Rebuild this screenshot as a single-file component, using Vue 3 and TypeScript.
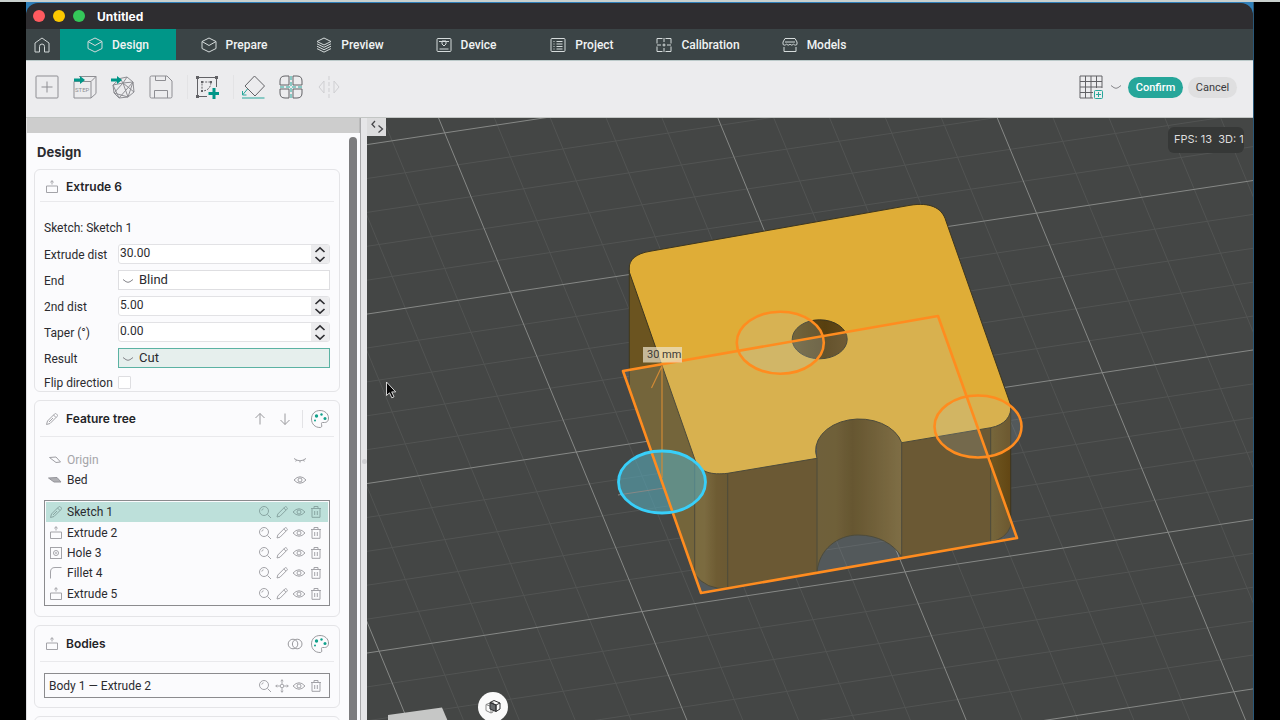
<script setup lang="ts">
import { ref } from 'vue'

interface Tab { label: string; icon: string }
interface Feature { label: string; icon: string }
interface Line { x1: number; y1: number; x2: number; y2: number; major: boolean }

const tabs: Tab[] = [
  { label: 'Design', icon: 'cube' },
  { label: 'Prepare', icon: 'cube' },
  { label: 'Preview', icon: 'layers' },
  { label: 'Device', icon: 'device' },
  { label: 'Project', icon: 'project' },
  { label: 'Calibration', icon: 'calibration' },
  { label: 'Models', icon: 'models' },
]
const activeTab = ref('Design')

const toolGroups = [
  [
    { icon: 't-add', label: 'New' },
    { icon: 't-step', label: 'Import STEP' },
    { icon: 't-mesh', label: 'Import mesh' },
    { icon: 't-save', label: 'Save' },
  ],
  [{ icon: 't-sketch', label: 'New sketch' }],
  [
    { icon: 't-plane', label: 'Place on face' },
    { icon: 't-pattern', label: 'Pattern' },
    { icon: 't-mirror', label: 'Mirror' },
  ],
]

const extrudeDist = ref('30.00')
const endType = ref('Blind')
const secondDist = ref('5.00')
const taper = ref('0.00')
const result = ref('Cut')
const flip = ref(false)

const features: Feature[] = [
  { label: 'Sketch 1', icon: 'pencil' },
  { label: 'Extrude 2', icon: 'extrude' },
  { label: 'Hole 3', icon: 'hole' },
  { label: 'Fillet 4', icon: 'fillet' },
  { label: 'Extrude 5', icon: 'extrude' },
]
const selected = ref('Sketch 1')
const featureActions = ['search', 'edit', 'eye', 'trash']
const bodyActions = ['search', 'move', 'eye', 'trash']

// Ground grid: one major line every five cells, cell edges u and v.
const origin = { x: 444.7, y: 132.9 }
const u = { x: 52.6, y: -7.93 }
const v = { x: 13.16, y: 31.91 }
const at = (i: number, j: number) => ({
  x: origin.x + i * u.x + j * v.x,
  y: origin.y + i * u.y + j * v.y,
})
const line = (a: { x: number; y: number }, b: { x: number; y: number }, n: number): Line => ({
  x1: a.x, y1: a.y, x2: b.x, y2: b.y, major: n % 5 === 0,
})
const grid: Line[] = []
for (let i = -12; i <= 30; i++) grid.push(line(at(i, -12), at(i, 34), i))
for (let j = -12; j <= 34; j++) grid.push(line(at(-12, j), at(30, j), j))
grid.sort((a, b) => Number(a.major) - Number(b.major))
</script>

<template>
  <svg class="defs" aria-hidden="true">
    <symbol id="home" viewBox="0 0 16 16"><path d="M1 6 8 1l7 5v9h-4.500V9.500a2.500 2.500 0 0 0-5 0V15H1z" /></symbol>
    <symbol id="cube" viewBox="0 0 16 16"><path d="M8 1l7 3.500v7L8 15l-7-3.500v-7zM1 4.500 8 8.500l7-4" /></symbol>
    <symbol id="layers" viewBox="0 0 16 16"><path d="M8 1l7 3.500-7 3.500-7-3.500zM1 6.800l7 3.500 7-3.500M1 9.200l7 3.500 7-3.500M1 11.600l7 3.500 7-3.500" /></symbol>
    <symbol id="device" viewBox="0 0 16 16"><rect x="1" y="1.500" width="14" height="13" rx="1" /><path d="M3 4.500h10M3.500 12h9M6 4h4v3L8 9 6 7z" /></symbol>
    <symbol id="project" viewBox="0 0 16 16"><rect x="1" y="1.500" width="14" height="13" rx="1" /><path d="M3.500 4.500h1M6.500 4.500h6M3.500 7h1M6.500 7h6M3.500 9.500h1M6.500 9.500h6M3.500 12h1M6.500 12h6" /></symbol>
    <symbol id="calibration" viewBox="0 0 16 16"><path d="M6.500 1.500H1v5M9.500 1.500H15v5M6.500 14.500H1v-5M9.500 14.500H15v-5M8 1v4M8 11v4M1 8h4M11 8h4M6.500 8h3M8 6.500v3" /></symbol>
    <symbol id="models" viewBox="0 0 16 16"><path d="M3 1.500h10L15 5v2c0 1.500-2.500 1.500-3.500 0-1 1.500-2.500 1.500-3.500 0-1 1.500-2.500 1.500-3.500 0C3.500 8.500 1 8.500 1 7V5zM3 5h10M2 10v4.500h12V10" /></symbol>

    <symbol id="t-add" viewBox="0 0 24 24"><rect x="1" y="1" width="22" height="22" rx="1" /><path d="M12 6.500v11M6.500 12h11" /></symbol>
    <symbol id="t-mesh" viewBox="0 0 24 24"><path d="M9 3.500 16 2l6 5 1 10-6 5-9 1-5-5-1-8zM2 10l10-2 10-1M12 8l5 14M12 8 3 18M2 10l6 13M3 18l14 4M22 7 8 23M9 3.500 12 8l4-6M12 8l11 9M17 22l5-15" /><path class="solid" d="M0 3.500h6V1l5 4-5 4V6.500H0z" /></symbol>
    <symbol id="t-save" viewBox="0 0 24 24"><path d="M1 2.500Q1 1 2.500 1H18l5 5v15.500q0 1.500-1.500 1.500h-19Q1 23 1 21.500zM6.500 1v4.500h10V1M5.500 23v-7.500h13V23" /></symbol>
    <symbol id="t-sketch" viewBox="0 0 24 24"><path d="M2.500 2v20M2 2.500h20M21.500 2v10M2 21.500h10" /><path d="M7 7h9c0 5-3 9-9 9z" stroke-dasharray="2 1.200" /><path class="dot" d="M1 1h3v3H1zM20 1h3v3h-3zM1 20h3v3H1zM6 6h2v2H6zM15 6h2v2h-2zM6 15h2v2H6z" /><path class="solid" d="M17.500 13h3v4h4v3h-4v4h-3v-4h-4v-3h4z" /></symbol>
    <symbol id="t-plane" viewBox="0 0 24 24"><path d="M13.500 1 23.500 11l-9.500 10L4 11z" /><path class="green" d="M1 23h22.500M6.500 14 1.500 20M1.500 16v4h4" /></symbol>
    <symbol id="t-pattern" viewBox="0 0 24 24"><path d="M10 1v9H1V6q0-5 5-5zM14 1v9h9V6q0-5-5-5zM10 23v-9H1v4q0 5 5 5zM14 23v-9h9v4q0 5-5 5z" /><path class="green" d="M12 1v22M1 12h22" stroke-dasharray="4 2" /></symbol>
    <symbol id="t-mirror" viewBox="0 0 24 24"><path d="M7 6v12L2 12zM17 6v12l5-6z" /><path d="M12 1v22" stroke-dasharray="4 2" /></symbol>
    <symbol id="t-grid" viewBox="0 0 24 24"><path d="M23 13V1H1v22h13M1 6.500h22M1 12h22M1 17.500h13M6.500 1v22M12 1v22M17.500 1v12" /><g class="green"><rect x="15.500" y="15.500" width="8" height="8" rx="1" /><path d="M19.500 17v5M17 19.500h5" /></g></symbol>

    <symbol id="chev" viewBox="0 0 12 8"><path d="M1 2.500 4 4.700q2 1.200 4 0l3-2.200" /></symbol>
    <symbol id="up" viewBox="0 0 12 8"><path d="M1.500 6 6 1.800 10.500 6" /></symbol>
    <symbol id="down" viewBox="0 0 12 8"><path d="M1.500 2 6 6.200 10.500 2" /></symbol>
    <symbol id="extrude" viewBox="0 0 14 14"><path d="M1.500 6h11v6.500h-11zM7 4.500V.8M5.300 2.300 7 .7l1.700 1.600" /></symbol>
    <symbol id="pencil" viewBox="0 0 14 14"><path d="M1.500 12.500l1-3.500L9.500 2q1-1 2 0l.5.500q1 1 0 2l-7 7zM8.500 3l2.500 2.500M4 10l4-4" /></symbol>
    <symbol id="edit" viewBox="0 0 14 14"><path d="M2 12l.8-3L9.800 2q.8-.8 1.600 0l.6.600q.8.800 0 1.600L5 11.200zM8.800 3l2.200 2.200" /></symbol>
    <symbol id="hole" viewBox="0 0 14 14"><rect x="1.500" y="1.500" width="11" height="11" /><circle cx="7" cy="7" r="2.500" /><circle cx="7" cy="7" r=".5" /></symbol>
    <symbol id="fillet" viewBox="0 0 14 14"><path d="M1.500 12.500V6q0-4.500 4.500-4.500h6.500" /></symbol>
    <symbol id="plane" viewBox="0 0 14 14"><path d="M1.500 4.500 8 4l4.500 5-4.500.5z" /></symbol>
    <symbol id="bed" viewBox="0 0 14 14"><path class="bed" d="M.5 5 9 4.500l4 4.500H6z" /></symbol>
    <symbol id="search" viewBox="0 0 14 14"><circle cx="6" cy="6" r="4.500" /><path d="M9.500 9.500 13 13M3.800 5.500Q4 4 5.500 3.800" /></symbol>
    <symbol id="eye" viewBox="0 0 14 14"><path d="M1 7q6-6.500 12 0-6 6.500-12 0z" /><circle cx="7" cy="7" r="2" /></symbol>
    <symbol id="eye-off" viewBox="0 0 14 14"><path d="M1 5.500q6 4.500 12 0M3.500 7l-.8 1.500M7 8v1.500M10.500 7l.8 1.500" /></symbol>
    <symbol id="trash" viewBox="0 0 14 14"><path d="M2 3.500h10M5 3.500v-2h4v2M3 3.500v8.800h8V3.500M5.700 6v4M8.300 6v4" /></symbol>
    <symbol id="move" viewBox="0 0 14 14"><circle cx="7" cy="7" r="1.800" /><path d="M7 .8v4M7 9.200v4M.8 7h4M9.200 7h4M5.700 2 7 .8 8.300 2M5.700 12 7 13.200 8.300 12M2 5.700.8 7 2 8.300M12 5.700 13.200 7 12 8.300" /></symbol>
    <symbol id="arrow-up" viewBox="0 0 14 14"><path d="M7 12.500v-11M2.500 6 7 1.500 11.500 6" /></symbol>
    <symbol id="arrow-down" viewBox="0 0 14 14"><path d="M7 1.500v11M2.500 8 7 12.500 11.500 8" /></symbol>
    <symbol id="rings" viewBox="0 0 16 14"><circle cx="6" cy="7" r="4.800" /><circle cx="10.200" cy="7" r="4.800" /></symbol>
    <symbol id="palette" viewBox="0 0 20 20"><path d="M10 1.500c5 0 8.500 3.500 8.500 7.500 0 3.500-2 4.500-4 4.500h-2c-1.500 0-1 1.500-.8 2.500.4 2-.7 2.500-1.700 2.500C5 18.500 1.500 15 1.500 10S5 1.500 10 1.500z" /><g class="paint"><circle cx="6.500" cy="7" r="1.700" /><circle cx="11.500" cy="5.500" r="1.200" /><circle cx="15" cy="9.500" r="1.500" /><circle cx="5" cy="11.500" r="1" /></g></symbol>
  </svg>

  <div class="desktop">
    <div class="window">
      <header class="titlebar">
        <span class="light red"></span><span class="light yellow"></span><span class="light green-light"></span>
        <h1>Untitled</h1>
      </header>

      <nav class="tabs">
        <button class="home" aria-label="Home"><svg class="ico16"><use href="#home" /></svg></button>
        <button v-for="t in tabs" :key="t.label" class="tab" :class="{ active: t.label === activeTab }" @click="activeTab = t.label">
          <svg class="ico16"><use :href="'#' + t.icon" /></svg><span>{{ t.label }}</span>
        </button>
      </nav>

      <div class="toolbar">
        <div v-for="(g, n) in toolGroups" :key="n" class="tools">
          <button v-for="t in g" :key="t.icon" class="tool" :class="t.icon" :aria-label="t.label">
            <svg v-if="t.icon === 't-step'" viewBox="0 0 24 24"><path d="M1 6.500h17V23H1zM18 6.500 23 1.500H6M23 1.500v17L18 23" /><path class="solid" d="M1 3.500h6V1l5 4-5 4V6.500H1z" /><text class="step" x="2" y="17">STEP</text></svg>
            <svg v-else><use :href="'#' + t.icon" /></svg>
          </button>
        </div>
        <div class="spacer"></div>
        <button class="tool t-grid" aria-label="Grid"><svg><use href="#t-grid" /></svg></button>
        <button class="more" aria-label="Grid options"><svg><use href="#chev" /></svg></button>
        <button class="pill confirm">Confirm</button>
        <button class="pill cancel">Cancel</button>
      </div>

      <div class="body">
        <aside class="sidebar">
          <div class="strip"></div>
          <div class="scroll">
            <div class="content">
              <h2>Design</h2>

              <section class="card">
                <div class="head tight"><svg class="ico14"><use href="#extrude" /></svg><h3>Extrude 6</h3></div>
                <p class="source">Sketch: Sketch 1</p>
                <form class="form" @submit.prevent>
                  <label for="dist">Extrude dist</label>
                  <div class="spin"><input id="dist" v-model="extrudeDist" type="text" /><span class="steps"><button type="button" aria-label="Increase"><svg><use href="#up" /></svg></button><button type="button" aria-label="Decrease"><svg><use href="#down" /></svg></button></span></div>
                  <label for="end">End</label>
                  <div class="pick"><svg><use href="#chev" /></svg><select id="end" v-model="endType"><option>Blind</option></select></div>
                  <label for="dist2">2nd dist</label>
                  <div class="spin"><input id="dist2" v-model="secondDist" type="text" /><span class="steps"><button type="button" aria-label="Increase"><svg><use href="#up" /></svg></button><button type="button" aria-label="Decrease"><svg><use href="#down" /></svg></button></span></div>
                  <label for="taper">Taper (°)</label>
                  <div class="spin"><input id="taper" v-model="taper" type="text" /><span class="steps"><button type="button" aria-label="Increase"><svg><use href="#up" /></svg></button><button type="button" aria-label="Decrease"><svg><use href="#down" /></svg></button></span></div>
                  <label for="result">Result</label>
                  <div class="pick focus"><svg><use href="#chev" /></svg><select id="result" v-model="result"><option>Cut</option></select></div>
                  <label for="flip">Flip direction</label>
                  <input id="flip" v-model="flip" class="check" type="checkbox" />
                </form>
              </section>

              <section class="card">
                <div class="head">
                  <svg class="ico14"><use href="#pencil" /></svg><h3>Feature tree</h3>
                  <button class="plain" aria-label="Move up"><svg class="ico14"><use href="#arrow-up" /></svg></button>
                  <button class="plain" aria-label="Move down"><svg class="ico14"><use href="#arrow-down" /></svg></button>
                  <span class="rule"></span>
                  <button class="plain" aria-label="Colors"><svg class="ico18"><use href="#palette" /></svg></button>
                </div>
                <div class="refs">
                  <div class="ref off"><svg class="ico14"><use href="#plane" /></svg><span>Origin</span><button class="plain" aria-label="Show origin"><svg class="ico14"><use href="#eye-off" /></svg></button></div>
                  <div class="ref"><svg class="ico14"><use href="#bed" /></svg><span>Bed</span><button class="plain" aria-label="Hide bed"><svg class="ico14"><use href="#eye" /></svg></button></div>
                </div>
                <ul class="list tree">
                  <li v-for="f in features" :key="f.label" :class="{ selected: f.label === selected }" @click="selected = f.label">
                    <svg class="ico14"><use :href="'#' + f.icon" /></svg><span>{{ f.label }}</span>
                    <button v-for="a in featureActions" :key="a" class="plain" :aria-label="a"><svg class="ico14"><use :href="'#' + a" /></svg></button>
                  </li>
                </ul>
              </section>

              <section class="card">
                <div class="head pair">
                  <svg class="ico14"><use href="#extrude" /></svg><h3>Bodies</h3>
                  <button class="plain" aria-label="Boolean"><svg class="rings"><use href="#rings" /></svg></button>
                  <button class="plain" aria-label="Colors"><svg class="ico18"><use href="#palette" /></svg></button>
                </div>
                <ul class="list bodies">
                  <li><span>Body 1 — Extrude 2</span>
                    <button v-for="a in bodyActions" :key="a" class="plain" :aria-label="a"><svg class="ico14"><use :href="'#' + a" /></svg></button>
                  </li>
                </ul>
              </section>

              <section class="card last"></section>
            </div>
            <div class="thumb"></div>
          </div>
        </aside>
        <div class="splitter"><i></i></div>

        <main class="view">
          <svg class="scene" viewBox="367 118 887 602" preserveAspectRatio="xMinYMin slice">
            <defs>
              <linearGradient id="corner"><stop offset="0" stop-color="#735b25" /><stop offset=".3" stop-color="#735b26" /><stop offset=".65" stop-color="#644a17" /><stop offset="1" stop-color="#5f4617" /></linearGradient>
              <linearGradient id="cut"><stop offset="0" stop-color="#654e20" /><stop offset=".22" stop-color="#654e1e" /><stop offset=".42" stop-color="#5a4314" /><stop offset=".6" stop-color="#634b1b" /><stop offset="1" stop-color="#775f2c" /></linearGradient>
              <linearGradient id="right"><stop offset="0" stop-color="#6e5621" /><stop offset="1" stop-color="#624613" /></linearGradient>
              <linearGradient id="bore"><stop offset="0" stop-color="#66501c" /><stop offset=".3" stop-color="#5d4512" /><stop offset=".6" stop-color="#573f0f" /><stop offset="1" stop-color="#65491a" /></linearGradient>
            </defs>
            <rect x="367" y="118" width="887" height="602" fill="#444645" />
            <line v-for="(l, n) in grid" :key="n" :x1="l.x1" :y1="l.y1" :x2="l.x2" :y2="l.y2" :class="l.major ? 'major' : 'minor'" />
            <path d="M388 715l54-7.500 6 14h-60z" fill="#c6c7c6" />

            <path d="M629 268V388L695 575V459z" fill="#6b5420" />
            <path d="M694.500 458V574Q706 590 728 588.500V473z" fill="url(#corner)" />
            <path d="M727.700 473V588.300L817 573.500V458z" fill="#604618" />
            <path d="M901.700 442V557.500L990.700 542V427z" fill="#604618" />
            <path d="M990.700 427V542Q1006 539 1010.700 526V405z" fill="url(#right)" />
            <path d="M817 445V572C819 549 838 535 858 535S894 544 901.700 557V442A43 31 0 0 0 817 445z" fill="url(#cut)" />
            <path class="edge" d="M629.300 268C629 260 636 253.500 650 251.300L910 205.300C930 202 941 208 945 218.300L1010.700 405C1012 416 1005 425 990.700 427.700L901.700 442.700A43 31 0 0 0 817 458.300L727.700 473.300C712 475 699 473 694.700 459L629.300 272z" fill="#dfad37" />
            <path class="edge" fill="none" d="M629.300 270V385M694.700 460V574Q706 590 728 588.500M727.700 473V588M817 458V573M901.700 442.700V557M990.700 427.700V542Q1006 539 1010.700 526M1010.700 407V526M817 572C819 549 838 535 858 535S894 544 901.700 557" />
            <ellipse class="edge" cx="819.700" cy="339.300" rx="27.500" ry="19.500" fill="url(#bore)" />

            <path d="M623 371L938 316 1017 538 701 593z" fill="#afd0e1" fill-opacity=".14" />
            <ellipse cx="780.300" cy="342.700" rx="43.500" ry="31" fill="#afd0e1" fill-opacity=".17" />
            <ellipse cx="978" cy="426.500" rx="43.500" ry="31" fill="#afd0e1" fill-opacity=".14" />
            <ellipse cx="662" cy="482" rx="43.500" ry="31" fill="#58a8b8" fill-opacity=".6" />
            <path d="M618 495L664 488" class="major" />
            <path d="M662 478V366L651.500 388" fill="none" stroke="#d18a35" stroke-width="1.200" />
            <path d="M623 371L938 316 1017 538 701 593z" class="outline" />
            <ellipse cx="780.300" cy="342.700" rx="43.500" ry="31" class="outline" />
            <ellipse cx="978" cy="426.500" rx="43.500" ry="31" class="outline" />
            <ellipse cx="662" cy="482" rx="43.500" ry="31" fill="none" stroke="#38cffa" stroke-width="2.800" />
            <rect x="643" y="347" width="39" height="15.500" fill="#ebe3cd" fill-opacity=".7" />
            <text class="dim" x="647" y="358">30 mm</text>
            <path d="M386.500 382v13.500l3-2.700 2.300 5 2.200-1-2.300-4.900h4z" fill="#050505" stroke="#e8e8e8" stroke-width=".9" />
          </svg>
          <button class="collapse" aria-label="Collapse panel"><svg viewBox="0 0 18 18"><path d="M7 3 4 6.200 7 9.500M10.500 7.500l4 3.500-4 3.500" /></svg></button>
          <div class="fps">FPS: 13&nbsp; 3D: 1</div>
          <button class="gizmo" aria-label="View orientation"><svg viewBox="0 0 18 18"><path d="M2 6.500 9 4v10l-2 1-5-2.500zM2 6.500l5 2V15" /><path class="front" d="M6 4.500 12 7v6.500l-6-2.500z" /><path class="hard" d="M6 4.500 10 2.500 16 5v6l-4 2.500V7l4-2M12 7 6 4.500" /></svg></button>
        </main>
      </div>
    </div>
  </div>
</template>

<style>
html, body { margin: 0; background: #000; }
</style>

<style scoped>
* { box-sizing: border-box; }
button { font: inherit; color: inherit; border: 0; padding: 0; background: none; display: flex; align-items: center; justify-content: center; }
h1, h2, h3, p, ul { margin: 0; padding: 0; }
svg { fill: none; stroke: currentColor; stroke-width: 1; flex: none; display: block; }
.defs { position: absolute; width: 0; height: 0; }
.ico14 { width: 14px; height: 14px; }
.ico16 { width: 16px; height: 16px; }
.ico18 { width: 20px; height: 20px; }

.desktop { height: 100vh; padding: 0 26px; background: #000; border-top: 2px solid #c9d0ce; overflow: hidden; font-family: Roboto, "Noto Sans", sans-serif; font-size: 12px; color: #2b2b2f; }
.window { height: 100%; display: flex; flex-direction: column; background: #2f7fb8; border-right: 1px solid #2a5878; padding-top: 1px; }
.titlebar { height: 26px; flex: none; display: flex; align-items: center; background: #2e2d30; border-radius: 12px 12px 0 0; padding-left: 7px; color: #fff; }
.light { width: 12px; height: 12px; border-radius: 50%; margin-right: 8px; }
.red { background: #ff5a5f; }
.yellow { background: #fcc800; }
.green-light { background: #34c759; }
h1 { font-family: Inter, sans-serif; font-size: 12px; font-weight: 700; margin-left: 4px; }
.tabs { height: 31px; flex: none; display: flex; background: #3b4446; color: #f1f3f3; font-weight: 500; }
.home { width: 34px; padding-right: 2px; color: #cfd5d5; }
.tab { width: 116px; gap: 9px; }
.tab svg { color: #d5dbdb; }
.tab.active { background: #009688; }

.toolbar { height: 58px; flex: none; display: flex; align-items: center; background: #ececee; border-top: 1px solid #bccaca; border-bottom: 1px solid #c3c6c4; padding: 0 16px 4px 9px; }
.tools { display: flex; gap: 14px; }
.tools + .tools { margin-left: 14px; padding-left: 7px; border-left: 1px solid #e3e3e5; }
.tool { width: 24px; height: 24px; color: #8e8e93; }
.tool svg { width: 24px; height: 24px; overflow: visible; }
.t-sketch, .t-plane, .t-pattern, .t-grid { color: #626266; }
.t-mirror { color: #cfcfd2; }
.solid { fill: #009688; stroke: none; }
.dot { fill: #626266; stroke: none; }
.green { stroke: #26a69a; }
.step { font-size: 6px; fill: #8e8e93; stroke: none; }
.spacer { flex: 1; }
.more { width: 12px; height: 24px; margin: 0 6px 0 7px; color: #87878b; }
.more svg { width: 12px; height: 8px; }
.pill { height: 21px; border-radius: 11px; }
.confirm { width: 55px; background: #26a69a; color: #fff; font-size: 11px; font-weight: 500; }
.cancel { width: 49px; margin-left: 5px; background: #dfdfe0; color: #3a3a3d; font-size: 11px; }

.body { flex: 1; min-height: 0; display: flex; }
.sidebar { width: 335px; flex: none; display: flex; flex-direction: column; background: #fbfbfd; border-right: 1px solid #a9a9ab; border-left: 1px solid #e0e0e2; }
.strip { height: 15px; flex: none; background: #cdcdcd; border-right: 1px solid #bbb; }
.scroll { flex: 1; min-height: 0; display: flex; overflow: hidden; padding-left: 7px; }
.content { width: 306px; display: flex; flex-direction: column; gap: 8px; }
.thumb { width: 8px; margin: 4px 0 0 9px; background: #7c7c7e; border-radius: 4px 4px 0 0; }
h2 { font-family: Inter, sans-serif; font-size: 13px; line-height: 18px; padding: 10px 0 0 3px; font-weight: 700; }
.card { flex: none; border: 1px solid #e4e4e7; border-radius: 6px; padding: 0 9px; }
.card.last { height: 40px; }
.head { height: 36px; margin: 0 -4px; padding: 0 0 0 5px; display: flex; align-items: center; border-bottom: 1px solid #e9e9ec; color: #a3a3a8; }
.head.tight { height: 32px; padding-top: 2px; }
h3 { flex: 1; font-family: Inter, sans-serif; font-size: 12px; font-weight: 600; color: #242428; padding-left: 7px; }
.head .plain { margin-left: 11px; color: #9a9a9e; }
.head .plain:last-child { margin-right: 4px; }
.head.pair .plain:last-child { margin-left: 7px; }
.rings { width: 16px; height: 14px; }
.rule { width: 1px; height: 18px; margin: 0 -4px 0 10px; background: #e3e3e6; }
.paint { fill: #12a18c; stroke: none; }
.source { padding: 18px 0 8px; line-height: 16px; }
.form { display: grid; grid-template-columns: 74px 1fr; row-gap: 6px; grid-template-rows: repeat(5, 20px) 17px; align-items: center; }
.form label { padding-top: 1px; white-space: nowrap; }
.spin { height: 20px; display: flex; background: #fff; border: 1px solid #e2e2e5; border-radius: 3px; overflow: hidden; }
.spin input { flex: 1; min-width: 0; border: 0; outline: 0; background: none; padding: 0 1px 2px; font: inherit; color: inherit; }
.steps { width: 18px; display: flex; flex-direction: column; background: #ececee; }
.steps button { flex: 1; color: #2f2f33; }
.steps svg { width: 12px; height: 8px; stroke-width: 1.600; }
.pick { position: relative; height: 20px; background: #fff; border: 1px solid #dedee1; }
.pick svg { position: absolute; left: 3px; top: 6px; width: 12px; height: 8px; color: #85858a; }
.pick select { width: 100%; height: 100%; appearance: none; border: 0; outline: 0; background: transparent; padding: 0 0 2px 20px; font: inherit; font-size: 13px; color: inherit; }
.pick.focus { background: #e6efed; border-color: #5bb2a3; }
.check { appearance: none; width: 13px; height: 13px; margin: 0; border: 1px solid #dedee1; background: #fff; border-radius: 1px; }

.refs { padding: 13px 0 10px; }
.ref { height: 20px; display: flex; align-items: center; padding: 0 23px 0 4px; color: #2b2b2f; }
.ref span { flex: 1; padding-left: 5px; }
.ref svg { color: #9f9fa4; }
.ref.off { color: #a5a5a9; }
.bed { fill: #b0b0b4; stroke: #94949a; }
.list { list-style: none; border: 1px solid #8b8b8e; padding: 1px; display: flex; flex-direction: column; }
.tree { height: 106px; margin-bottom: 10px; }
.bodies { height: 25px; margin: 11px 0 9px; }
.list li { flex: 1; display: flex; align-items: center; padding: 0 5px 0 3px; }
.list span { flex: 1; padding-left: 4px; }
.bodies span { padding-left: 0; }
.list svg { color: #a3a3a8; }
.list .plain { margin-left: 3px; }
.selected { background: #bde0da; }
.list .selected svg { color: #88a5a2; }

.splitter { width: 6px; flex: none; background: #e6e6e8; display: flex; align-items: center; justify-content: center; }
.splitter i { width: 5px; height: 5px; border-radius: 50%; background: #cfcfd2; margin-top: 84px; }
.view { position: relative; flex: 1; min-width: 0; overflow: hidden; background: #444645; }
.scene { position: absolute; inset: 0; width: 100%; height: 100%; stroke: none; }
.minor { stroke: #525453; stroke-width: 1; }
.major { stroke: #868886; stroke-width: 1; }
.edge { stroke: #3d361f; stroke-width: 1; }
.outline { fill: none; stroke: #ff8c1f; stroke-width: 2.600; stroke-linejoin: round; }
.dim { font-size: 11px; fill: #3c3a35; }
.collapse { position: absolute; left: 0; top: 0; width: 19px; height: 18px; background: #dcdcdd; color: #47474a; }
.collapse svg { width: 18px; height: 18px; stroke-width: 1.300; }
.fps { position: absolute; top: 9px; right: 9px; width: 76px; height: 26px; line-height: 25px; padding-left: 6px; border-radius: 6px; background: #363837; color: #dedede; white-space: nowrap; font-family: Inter, sans-serif; font-size: 11px; }
.gizmo { position: absolute; left: 111px; bottom: -2px; width: 30px; height: 30px; border-radius: 50%; background: #fafafa; color: #8a8a8a; }
.gizmo svg { width: 18px; height: 18px; }
.front { fill: #66696c; stroke: #2f3032; }
.hard { stroke: #2f3032; }
</style>
